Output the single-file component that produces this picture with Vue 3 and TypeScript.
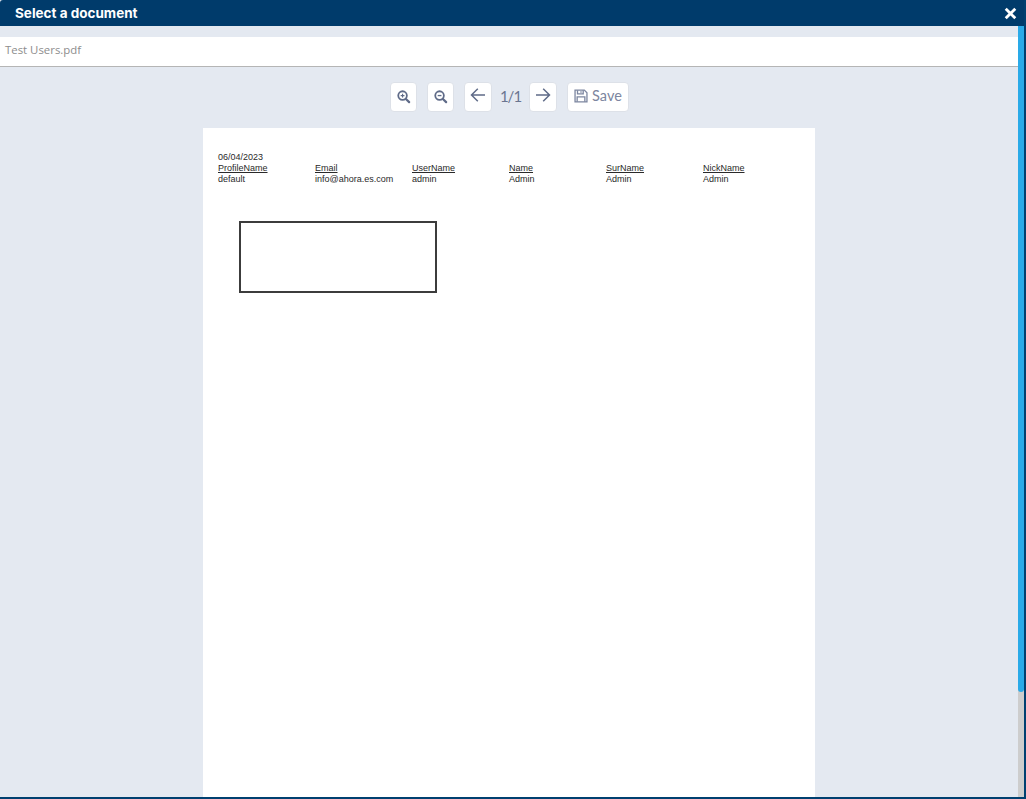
<script setup lang="ts">
const columns = [
  { head: 'ProfileName', value: 'default' },
  { head: 'Email', value: 'info@ahora.es.com' },
  { head: 'UserName', value: 'admin' },
  { head: 'Name', value: 'Admin' },
  { head: 'SurName', value: 'Admin' },
  { head: 'NickName', value: 'Admin' },
];
</script>

<template>
  <div class="dialog">
    <header class="title-bar">
      <span class="title">Select a document</span>
      <button class="close" title="Close">
        <svg viewBox="0 0 12 12" width="13" height="13">
          <path d="M1.6 1.6l8.8 8.8M10.4 1.6l-8.8 8.8" stroke="#fff" stroke-width="2.6" fill="none" />
        </svg>
      </button>
    </header>

    <div class="body">
      <div class="content">
        <div class="file-name">Test Users.pdf</div>

        <div class="toolbar">
          <button class="btn square" title="Zoom in">
            <svg viewBox="0 0 16 16" width="15" height="15" fill="none" stroke="#5f6b88">
              <circle cx="7" cy="7" r="4.6" stroke-width="1.9" />
              <path d="M10.6 10.6l3.4 3.4" stroke-width="2.4" stroke-linecap="round" />
              <path d="M5 7h4M7 5v4" stroke-width="1.2" />
            </svg>
          </button>
          <button class="btn square second" title="Zoom out">
            <svg viewBox="0 0 16 16" width="15" height="15" fill="none" stroke="#5f6b88">
              <circle cx="7" cy="7" r="4.6" stroke-width="1.9" />
              <path d="M10.6 10.6l3.4 3.4" stroke-width="2.4" stroke-linecap="round" />
              <path d="M5 7h4" stroke-width="1.4" />
            </svg>
          </button>
          <button class="btn arrow third" title="Previous page">
            <svg viewBox="0 0 16 16" width="16" height="16" fill="none" stroke="#5f6b88" stroke-width="1.5">
              <path d="M15 7h-13.500M7.800 0.700L1.500 7l6.300 6.300" />
            </svg>
          </button>
          <span class="pages">1/1</span>
          <button class="btn arrow" title="Next page">
            <svg viewBox="0 0 16 16" width="16" height="16" fill="none" stroke="#5f6b88" stroke-width="1.5">
              <path d="M1 7h13.500M8.200 0.700l6.300 6.300-6.300 6.300" />
            </svg>
          </button>
          <button class="btn save">
            <svg viewBox="0 0 16 16" width="14" height="14" fill="none" stroke="#7c86a0" stroke-width="1.5">
              <path d="M1.200 1.200h10.600l3 3v10.600H1.200z" />
              <path d="M4 1.500v4h6.500v-4M8 2.600v1.800" />
              <path d="M3.600 14.500V9h8.800v5.500" />
            </svg>
            <span>Save</span>
          </button>
        </div>

        <div class="viewer">
          <div class="page">
            <div class="date">06/04/2023</div>
            <div class="table">
              <div v-for="col in columns" :key="col.head" class="cell">
                <u>{{ col.head }}</u>
                <span>{{ col.value }}</span>
              </div>
            </div>
            <div class="box"></div>
          </div>
        </div>
      </div>

      <div class="scrollbar">
        <div class="thumb"></div>
      </div>
    </div>
  </div>
</template>

<style>
html,
body {
  margin: 0;
  overflow: hidden;
}
</style>

<style scoped>
.dialog {
  width: 1026px;
  height: 799px;
  box-sizing: border-box;
  display: flex;
  flex-direction: column;
  background: #e4e9f1;
  border-right: 2px solid #004070;
  border-bottom: 2px solid #004070;
  overflow: hidden;
}

.title-bar {
  flex: none;
  height: 26px;
  display: flex;
  align-items: center;
  justify-content: space-between;
  padding: 0 9px 0 15px;
  margin-right: -2px;
  border-radius: 3px 3px 0 0;
  background: #003b6b;
}

.title {
  font: 700 13.5px/26px Inter, "Liberation Sans", sans-serif;
  color: #fff;
}

.close {
  display: flex;
  padding: 0;
  border: none;
  background: none;
}

.body {
  flex: 1;
  min-height: 0;
  display: flex;
}

.content {
  flex: 1;
  min-width: 0;
  display: flex;
  flex-direction: column;
  padding-top: 11px;
}

.file-name {
  flex: none;
  height: 30px;
  box-sizing: border-box;
  padding-left: 5px;
  border-bottom: 1px solid #b5b5b5;
  background: #fff;
  font: 11.4px/25px "Open Sans", sans-serif;
  color: #8d8d8d;
}

.toolbar {
  flex: none;
  height: 30px;
  margin-top: 15px;
  padding-left: 390px;
  display: flex;
  align-items: flex-start;
}

.btn {
  height: 30px;
  box-sizing: border-box;
  padding: 0 0 2px;
  display: flex;
  align-items: center;
  justify-content: center;
  border: 1px solid #dde1e8;
  border-radius: 4px;
  background: #fff;
  color: #7c86a0;
}

.square {
  width: 27px;
  padding-right: 1px;
}

.second {
  margin-left: 10px;
}

.arrow {
  width: 28px;
}

.third {
  margin-left: 10px;
}

.pages {
  width: 37px;
  text-align: center;
  font: 15px/28px Lato, sans-serif;
  letter-spacing: -1px;
  color: #6a7590;
}

.save {
  width: 62px;
  margin-left: 10px;
  gap: 4px;
  font: 14.5px/24px Lato, sans-serif;
}

.viewer {
  flex: 1;
  min-height: 0;
  margin-top: 16px;
  padding-left: 203px;
  overflow: hidden;
}

.page {
  width: 612px;
  height: 792px;
  box-sizing: border-box;
  padding: 24px 0 0 15px;
  background: #fff;
  font: 9px/11px "Liberation Sans", Arial, sans-serif;
  color: #2a2a2a;
}

.table {
  display: grid;
  grid-template-columns: repeat(6, 97px);
}

.cell {
  display: flex;
  flex-direction: column;
}

.box {
  width: 198px;
  height: 72px;
  box-sizing: border-box;
  margin: 36px 0 0 21px;
  border: 2px solid #3c3c3c;
}

.scrollbar {
  flex: none;
  width: 6px;
  background: #cdcdcd;
}

.thumb {
  height: 666px;
  border-radius: 0 0 3px 3px;
  background: #2aaae8;
}
</style>
